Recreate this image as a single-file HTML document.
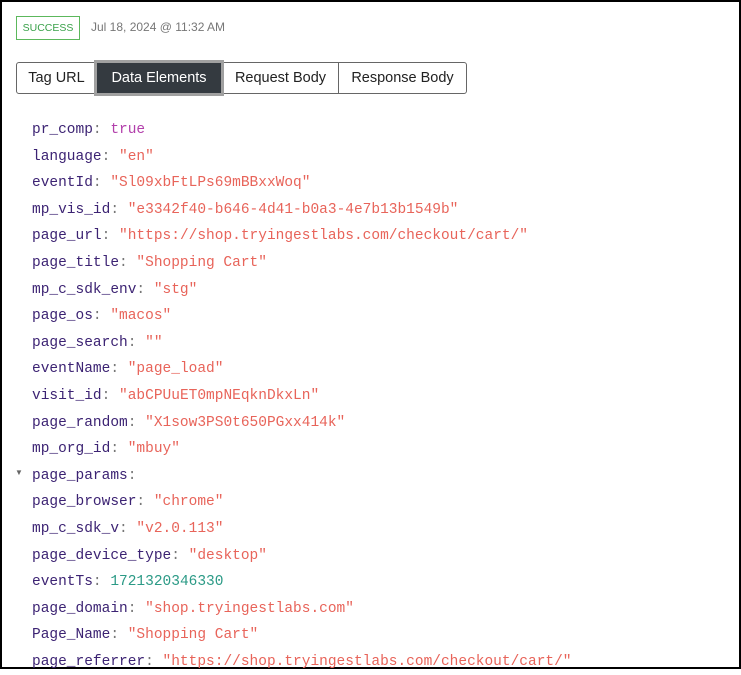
<!DOCTYPE html>
<html><head><style>
html,body{margin:0;padding:0;}
body{width:741px;height:670px;overflow:hidden;background:#fff;font-family:"Liberation Sans",sans-serif;position:relative;}
.frame{position:absolute;left:0;top:0;width:737px;height:665px;border:2px solid #000;}
.badge{position:absolute;left:16px;top:16px;width:64px;height:24px;border:1px solid #5cb85c;color:#3aa14a;font-size:10.5px;line-height:22px;text-align:center;box-sizing:border-box;}
.date{position:absolute;left:91px;top:20px;font-size:12px;color:#777;}
.tab{position:absolute;top:62px;height:32px;box-sizing:border-box;border:1px solid #666;background:#fff;color:#222;font-size:14.5px;line-height:30px;text-align:center;}
.tab.on{background:#343a40;color:#fff;border:3px solid #a0a0a0;line-height:30px;top:60px;height:36px;}
.code{position:absolute;left:32px;top:117px;font-family:"Liberation Mono",monospace;font-size:14.5px;line-height:26.6px;white-space:pre;}
.k{color:#3c2373}.p{color:#777}.s{color:#e8645a}.b{color:#b23fab}.n{color:#2b9a86}
.tri{position:absolute;left:15px;top:468px;font-size:8px;color:#666;}
</style></head><body>
<div class="frame"></div>
<div class="badge">SUCCESS</div>
<div class="date">Jul 18, 2024 @ 11:32 AM</div>
<div class="tab" style="left:16px;width:81px;border-radius:3px 0 0 3px">Tag URL</div>
<div class="tab" style="left:338px;width:129px;border-radius:0 3px 3px 0">Response Body</div>
<div class="tab" style="left:222px;width:117px">Request Body</div>
<div class="tab on" style="left:94px;width:130px">Data Elements</div>
<div class="tri">▼</div>
<div class="code"><span class="k">pr_comp</span><span class="p">: </span><span class="b">true</span>
<span class="k">language</span><span class="p">: </span><span class="s">"en"</span>
<span class="k">eventId</span><span class="p">: </span><span class="s">"Sl09xbFtLPs69mBBxxWoq"</span>
<span class="k">mp_vis_id</span><span class="p">: </span><span class="s">"e3342f40-b646-4d41-b0a3-4e7b13b1549b"</span>
<span class="k">page_url</span><span class="p">: </span><span class="s">"https://shop.tryingestlabs.com/checkout/cart/"</span>
<span class="k">page_title</span><span class="p">: </span><span class="s">"Shopping Cart"</span>
<span class="k">mp_c_sdk_env</span><span class="p">: </span><span class="s">"stg"</span>
<span class="k">page_os</span><span class="p">: </span><span class="s">"macos"</span>
<span class="k">page_search</span><span class="p">: </span><span class="s">""</span>
<span class="k">eventName</span><span class="p">: </span><span class="s">"page_load"</span>
<span class="k">visit_id</span><span class="p">: </span><span class="s">"abCPUuET0mpNEqknDkxLn"</span>
<span class="k">page_random</span><span class="p">: </span><span class="s">"X1sow3PS0t650PGxx414k"</span>
<span class="k">mp_org_id</span><span class="p">: </span><span class="s">"mbuy"</span>
<span class="k">page_params</span><span class="p">:</span>
<span class="k">page_browser</span><span class="p">: </span><span class="s">"chrome"</span>
<span class="k">mp_c_sdk_v</span><span class="p">: </span><span class="s">"v2.0.113"</span>
<span class="k">page_device_type</span><span class="p">: </span><span class="s">"desktop"</span>
<span class="k">eventTs</span><span class="p">: </span><span class="n">1721320346330</span>
<span class="k">page_domain</span><span class="p">: </span><span class="s">"shop.tryingestlabs.com"</span>
<span class="k">Page_Name</span><span class="p">: </span><span class="s">"Shopping Cart"</span>
<span class="k">page_referrer</span><span class="p">: </span><span class="s">"https://shop.tryingestlabs.com/checkout/cart/"</span></div>
</body></html>
